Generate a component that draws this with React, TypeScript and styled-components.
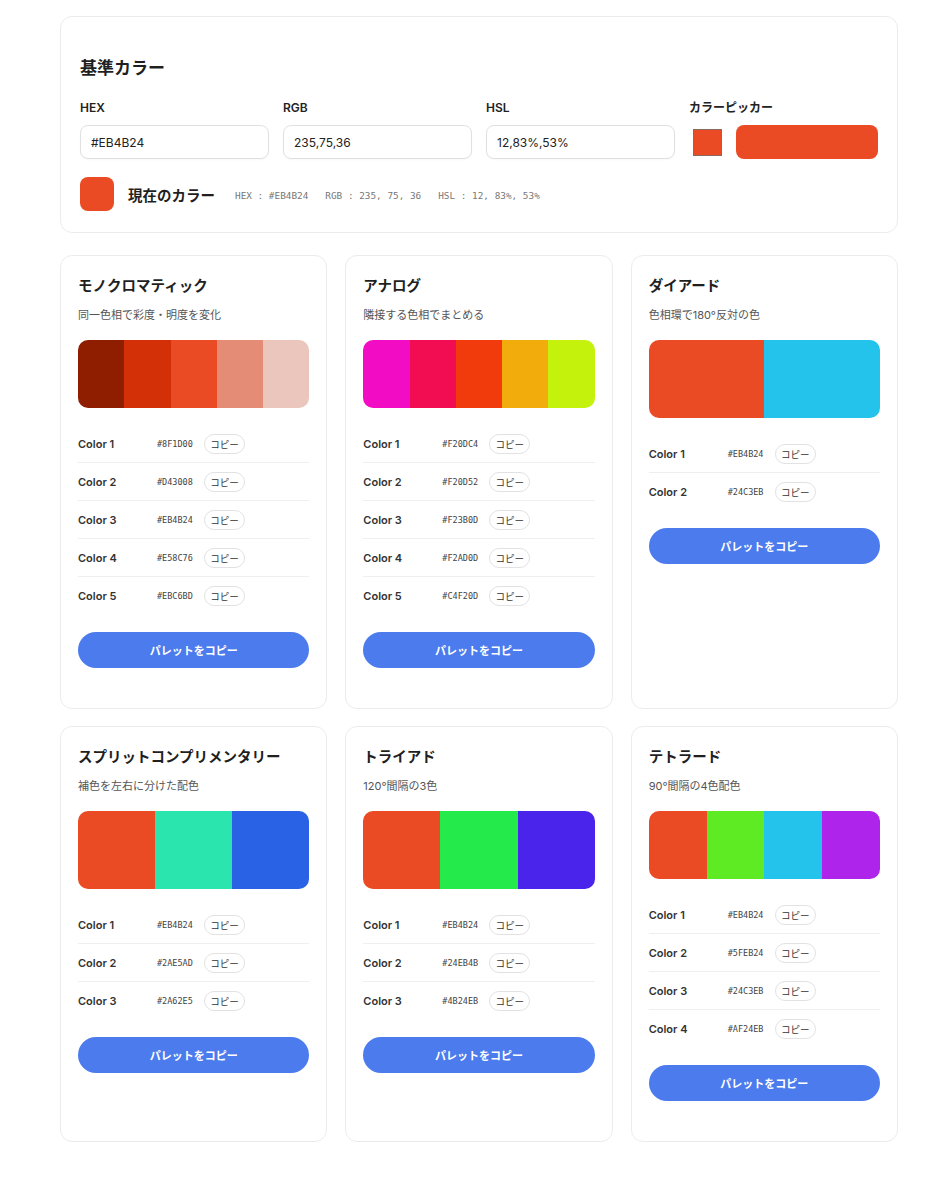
import React from 'react';
import styled, { createGlobalStyle } from 'styled-components';

interface Scheme {
  title: string;
  desc: string;
  colors: string[];
}

const BASE = { hex: '#EB4B24', rgb: '235,75,36', hsl: '12,83%,53%' };

const schemes: Scheme[] = [
  {
    title: 'モノクロマティック',
    desc: '同一色相で彩度・明度を変化',
    colors: ['#8F1D00', '#D43008', '#EB4B24', '#E58C76', '#EBC6BD'],
  },
  {
    title: 'アナログ',
    desc: '隣接する色相でまとめる',
    colors: ['#F20DC4', '#F20D52', '#F23B0D', '#F2AD0D', '#C4F20D'],
  },
  {
    title: 'ダイアード',
    desc: '色相環で180°反対の色',
    colors: ['#EB4B24', '#24C3EB'],
  },
  {
    title: 'スプリットコンプリメンタリー',
    desc: '補色を左右に分けた配色',
    colors: ['#EB4B24', '#2AE5AD', '#2A62E5'],
  },
  {
    title: 'トライアド',
    desc: '120°間隔の3色',
    colors: ['#EB4B24', '#24EB4B', '#4B24EB'],
  },
  {
    title: 'テトラード',
    desc: '90°間隔の4色配色',
    colors: ['#EB4B24', '#5FEB24', '#24C3EB', '#AF24EB'],
  },
];

const GlobalStyle = createGlobalStyle`
  html, body {
    margin: 0;
    padding: 0;
    background: #ffffff;
  }
  body {
    font-family: Inter, "Noto Sans CJK JP", "Noto Sans", sans-serif;
    color: #1f1f1f;
  }
  * {
    box-sizing: border-box;
  }
`;

const Page = styled.div`
  width: 838px;
  margin-left: 60px;
  padding: 16px 0 40px;
  display: flex;
  flex-direction: column;
  gap: 22px;
`;

const Panel = styled.section`
  border: 1px solid #ececec;
  border-radius: 12px;
  background: #fff;
  padding: 39px 19px 21px;
`;

const PanelTitle = styled.h2`
  margin: 0 0 20px;
  font-size: 17px;
  line-height: 24px;
  font-weight: 700;
`;

const FieldGrid = styled.div`
  display: grid;
  grid-template-columns: repeat(4, 1fr);
  gap: 14px;
`;

const Field = styled.div`
  display: flex;
  flex-direction: column;
  gap: 9px;
`;

const FieldLabel = styled.label`
  font-size: 12px;
  line-height: 16px;
  font-weight: 600;
  color: #222;
`;

const TextInput = styled.div`
  height: 34px;
  border: 1px solid #e0e0e0;
  border-radius: 8px;
  padding: 0 10px;
  display: flex;
  align-items: center;
  font-size: 12px;
  color: #222;
  box-shadow: 0 1px 2px rgba(0, 0, 0, 0.03);
`;

const PickerRow = styled.div`
  display: flex;
  align-items: center;
  gap: 14px;
  height: 34px;
`;

const PickerSwatch = styled.div<{ $color: string }>`
  width: 29px;
  height: 27px;
  margin-left: 4px;
  background: ${(p) => p.$color};
  border: 1px solid #8a6a60;
`;

const PickerBar = styled.div<{ $color: string }>`
  flex: 1;
  height: 34px;
  border-radius: 8px;
  background: ${(p) => p.$color};
`;

const CurrentRow = styled.div`
  margin-top: 18px;
  display: flex;
  align-items: center;
  gap: 14px;
`;

const CurrentSwatch = styled.div<{ $color: string }>`
  width: 34px;
  height: 34px;
  border-radius: 8px;
  background: ${(p) => p.$color};
`;

const CurrentLabel = styled.span`
  font-size: 14.5px;
  font-weight: 700;
  margin-right: 6px;
`;

const MonoInfo = styled.span`
  font-family: "DejaVu Sans Mono", "Liberation Mono", monospace;
  font-size: 9.4px;
  color: #777;
  white-space: pre;
  padding-top: 2px;
`;

const CardGrid = styled.div`
  display: grid;
  grid-template-columns: repeat(3, 1fr);
  gap: 17px 18px;
`;

const Card = styled.article`
  border: 1px solid #ececec;
  border-radius: 12px;
  background: #fff;
  padding: 19px 17px 40px;
  display: flex;
  flex-direction: column;
`;

const CardTitle = styled.h3`
  margin: 0;
  font-size: 14.5px;
  line-height: 21px;
  font-weight: 700;
`;

const CardDesc = styled.p`
  margin: 11px 0 17px;
  font-size: 11px;
  line-height: 16px;
  color: #555;
`;

const Palette = styled.div<{ $height: number }>`
  display: flex;
  height: ${(p) => p.$height}px;
  border-radius: 10px;
  overflow: hidden;
`;

const Chip = styled.div<{ $color: string }>`
  flex: 1;
  background: ${(p) => p.$color};
`;

const ColorList = styled.div`
  margin: 17px 0;
  display: flex;
  flex-direction: column;
`;

const ColorRow = styled.div`
  height: 38px;
  display: flex;
  align-items: center;
  border-bottom: 1px solid #efefef;

  &:last-child {
    border-bottom: none;
  }
`;

const ColorName = styled.span`
  width: 79px;
  font-size: 11px;
  font-weight: 600;
  color: #333;
`;

const ColorHex = styled.span`
  width: 47px;
  font-family: "DejaVu Sans Mono", "Liberation Mono", monospace;
  font-size: 8.5px;
  color: #444;
`;

const CopyChip = styled.button`
  width: 41px;
  height: 20px;
  padding: 0;
  border: 1px solid #e2e2e2;
  border-radius: 10px;
  background: #fff;
  font-family: inherit;
  font-size: 9.5px;
  color: #333;
  cursor: pointer;
`;

const PaletteButton = styled.button`
  height: 36px;
  border: none;
  border-radius: 18px;
  background: #4b7bec;
  color: #fff;
  font-family: inherit;
  font-size: 11px;
  font-weight: 700;
  cursor: pointer;
`;

const SchemeCard: React.FC<{ scheme: Scheme }> = ({ scheme }) => (
  <Card>
    <CardTitle>{scheme.title}</CardTitle>
    <CardDesc>{scheme.desc}</CardDesc>
    <Palette $height={scheme.colors.length <= 3 ? 78 : 68}>
      {scheme.colors.map((c) => (
        <Chip key={c} $color={c} />
      ))}
    </Palette>
    <ColorList>
      {scheme.colors.map((c, i) => (
        <ColorRow key={c + i}>
          <ColorName>Color {i + 1}</ColorName>
          <ColorHex>{c}</ColorHex>
          <CopyChip>コピー</CopyChip>
        </ColorRow>
      ))}
    </ColorList>
    <PaletteButton>パレットをコピー</PaletteButton>
  </Card>
);

export default function App() {
  return (
    <>
      <GlobalStyle />
      <Page>
        <Panel>
          <PanelTitle>基準カラー</PanelTitle>
          <FieldGrid>
            <Field>
              <FieldLabel>HEX</FieldLabel>
              <TextInput>{BASE.hex}</TextInput>
            </Field>
            <Field>
              <FieldLabel>RGB</FieldLabel>
              <TextInput>{BASE.rgb}</TextInput>
            </Field>
            <Field>
              <FieldLabel>HSL</FieldLabel>
              <TextInput>{BASE.hsl}</TextInput>
            </Field>
            <Field>
              <FieldLabel>カラーピッカー</FieldLabel>
              <PickerRow>
                <PickerSwatch $color={BASE.hex} />
                <PickerBar $color={BASE.hex} />
              </PickerRow>
            </Field>
          </FieldGrid>
          <CurrentRow>
            <CurrentSwatch $color={BASE.hex} />
            <CurrentLabel>現在のカラー</CurrentLabel>
            <MonoInfo>{'HEX : #EB4B24   RGB : 235, 75, 36   HSL : 12, 83%, 53%'}</MonoInfo>
          </CurrentRow>
        </Panel>
        <CardGrid>
          {schemes.map((s) => (
            <SchemeCard key={s.title} scheme={s} />
          ))}
        </CardGrid>
      </Page>
    </>
  );
}
